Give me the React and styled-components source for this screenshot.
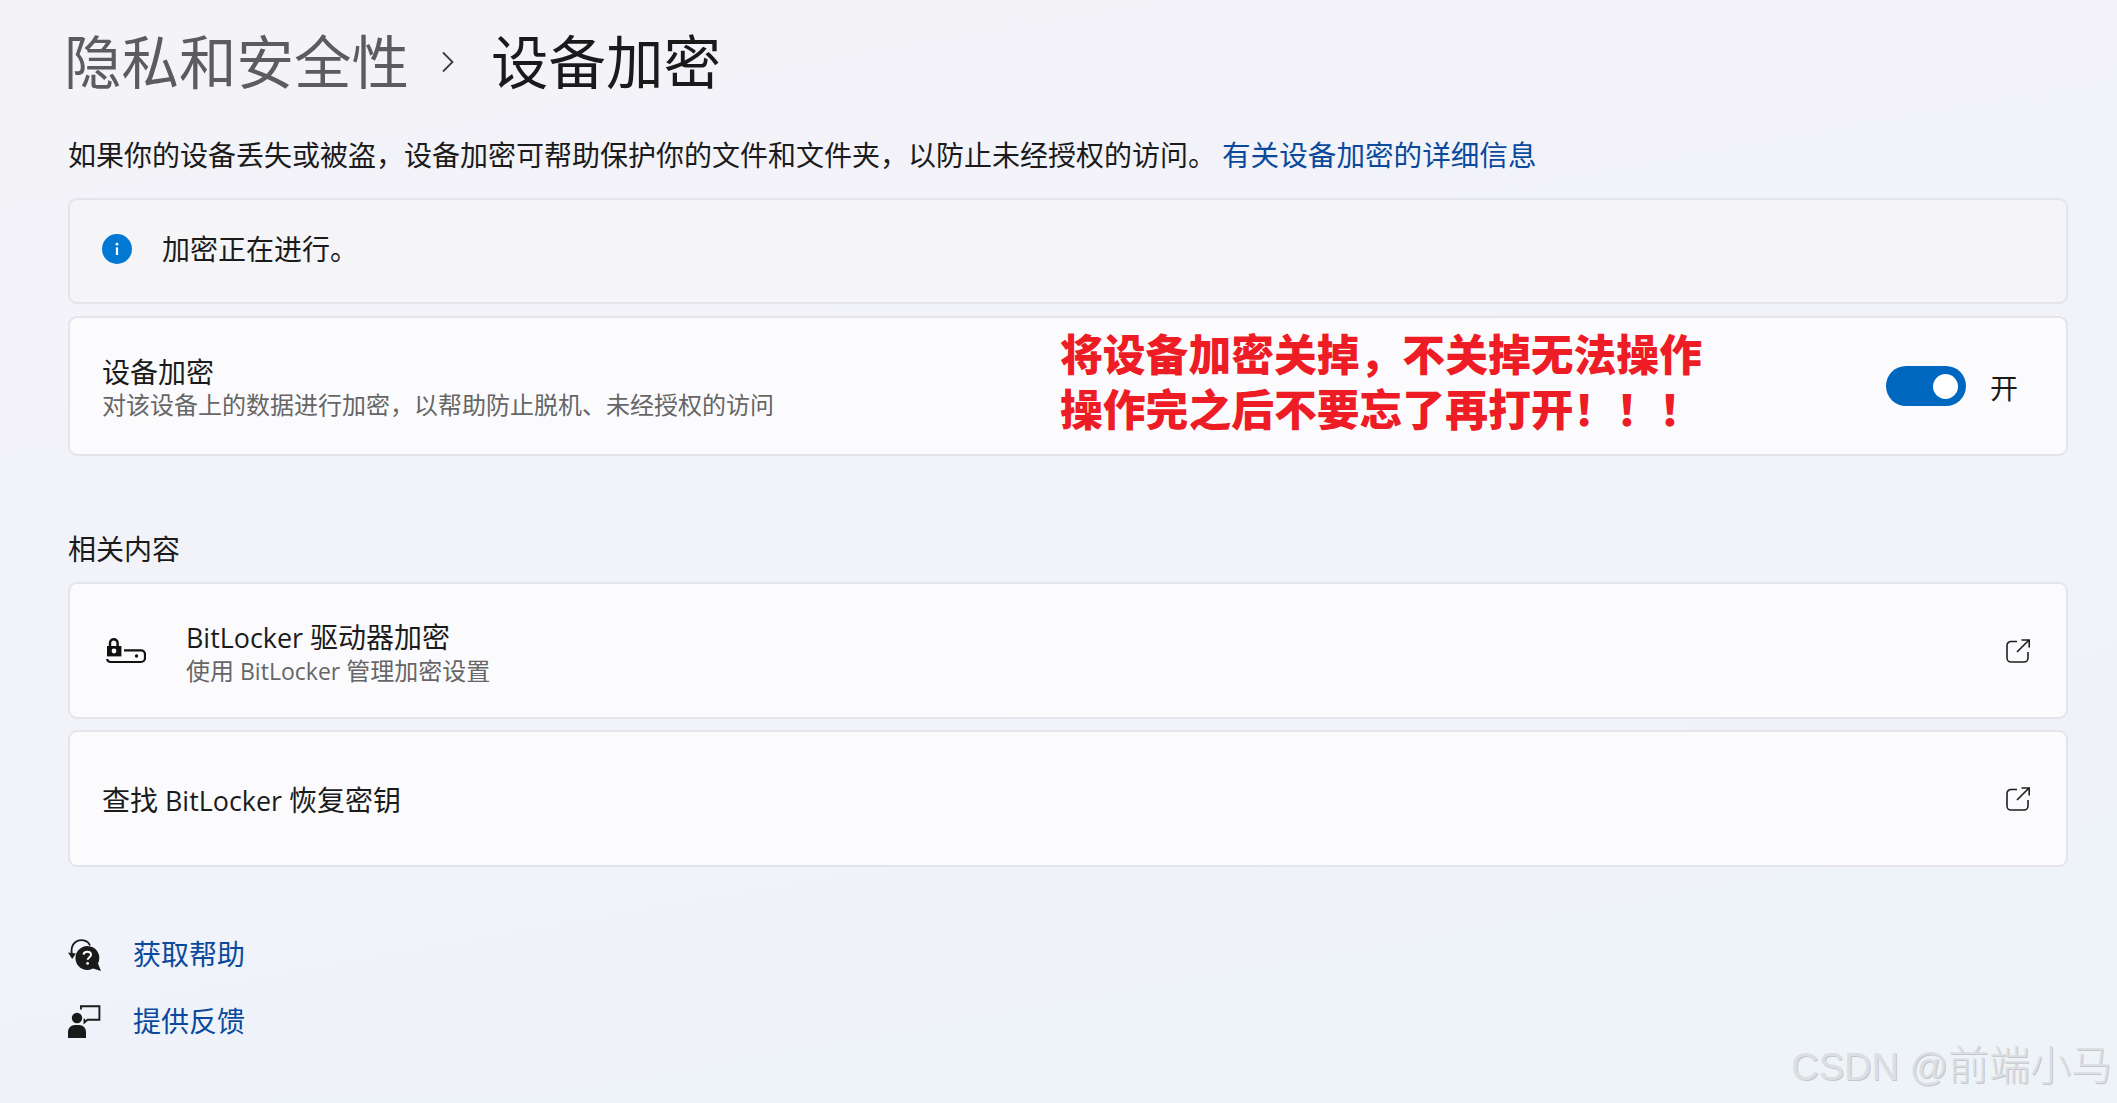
import React from "react";
import styled, { createGlobalStyle } from "styled-components";

const FONT = `"Open Sans", "Noto Sans CJK SC", sans-serif`;

const GlobalStyle = createGlobalStyle`
  html, body {
    margin: 0;
    padding: 0;
    height: 100%;
    overflow: hidden;
  }
  body {
    font-family: ${FONT};
    color: #1b1b1b;
  }
`;

const ExternalIcon = () => (
  <svg width="24" height="24" viewBox="0 0 24 24" fill="none" stroke="#1f1f1f" strokeWidth="1.6">
    <path d="M11 2.5H5a4 4 0 0 0-4 4V19a4 4 0 0 0 4 4h13a4 4 0 0 0 4-4v-6" />
    <path d="M11 13 23 1M15.5 1H23.2V8.5" />
  </svg>
);

const LockDriveIcon = () => (
  <svg width="40" height="27" viewBox="0 0 40 27" fill="none">
    <path d="M4 10V6a3.8 3.8 0 0 1 7.6 0v4" stroke="#111" strokeWidth="2.4" />
    <path d="M1 9h14.4v10.4H1z" fill="#111" />
    <circle cx="8" cy="14" r="2.4" fill="#fff" />
    <path d="M18 13.4h17a4 4 0 0 1 4 4v3.6a4 4 0 0 1-4 4H5a4 4 0 0 1-4-3" stroke="#111" strokeWidth="2.2" />
    <circle cx="30.5" cy="19" r="1.7" fill="#111" />
  </svg>
);

const HelpIcon = () => (
  <svg width="33" height="33" viewBox="0 0 33 33" fill="none">
    <path d="M22 7.5C20 2 12 .5 7.5 4 3.6 7 3 12 4 17" stroke="#1a1a1a" strokeWidth="1.8" />
    <path d="M0 14.5 4.2 21 8 15.5z" fill="#1a1a1a" />
    <path d="M19.5 8a12 12 0 1 0 5.6 22.6L33 33l-3-7.6A12 12 0 0 0 19.5 8z" fill="#1a1a1a" />
    <path d="M15.6 16.6c.3-3.8 7.4-3.8 7.4.2 0 2.8-3.3 2.6-3.3 5" stroke="#fff" strokeWidth="2" />
    <circle cx="19.6" cy="25.4" r="1.4" fill="#fff" />
  </svg>
);

const FeedbackIcon = () => (
  <svg width="33" height="33" viewBox="0 0 33 33" fill="none">
    <circle cx="9" cy="13" r="5.2" fill="#1a1a1a" />
    <path d="M0 33v-6c0-4 3-7 7-7h4c4 0 7 3 7 7v6z" fill="#1a1a1a" />
    <path d="M13 4.5V1.2h18.4v13.6H19.5l-3 2.6v-2.6H17" stroke="#1a1a1a" strokeWidth="1.9" />
  </svg>
);

const App = () => (
  <Page>
    <GlobalStyle />
    <TitleRow>
      <ParentTitle>隐私和安全性</ParentTitle>
      <Chevron width="16" height="24" viewBox="0 0 16 24" fill="none">
        <path d="M3 2.5 12.5 12 3 21.5" stroke="#3c3c3c" strokeWidth="1.8" />
      </Chevron>
      <CurrentTitle>设备加密</CurrentTitle>
    </TitleRow>

    <Description>
      如果你的设备丢失或被盗，设备加密可帮助保护你的文件和文件夹，以防止未经授权的访问。
      <DescLink>有关设备加密的详细信息</DescLink>
    </Description>

    <InfoCard>
      <InfoDot>
        <svg width="30" height="30" viewBox="0 0 30 30">
          <circle cx="15" cy="15" r="15" fill="#0078d4" />
          <circle cx="15" cy="10.2" r="1.4" fill="#fff" />
          <path d="M13.9 13.4h2.2v7.6h-2.2z" fill="#fff" />
        </svg>
      </InfoDot>
      <BodyText>加密正在进行。</BodyText>
    </InfoCard>

    <DeviceCard>
      <TextStack $nudge={2}>
        <BodyText>设备加密</BodyText>
        <SubText>对该设备上的数据进行加密，以帮助防止脱机、未经授权的访问</SubText>
      </TextStack>
      <Annotation>
        将设备加密关掉，不关掉无法操作
        <br />
        操作完之后不要忘了再打开！！！
      </Annotation>
      <ToggleWrap>
        <ToggleTrack>
          <ToggleKnob />
        </ToggleTrack>
        <ToggleLabel>开</ToggleLabel>
      </ToggleWrap>
    </DeviceCard>

    <SectionHead>相关内容</SectionHead>

    <LinkCard>
      <LeadIcon>
        <LockDriveIcon />
      </LeadIcon>
      <TextStack $nudge={3}>
        <BodyText>
          <Latin>BitLocker </Latin>驱动器加密
        </BodyText>
        <SubText>
          使用<Latin> BitLocker </Latin>管理加密设置
        </SubText>
      </TextStack>
      <TrailIcon>
        <ExternalIcon />
      </TrailIcon>
    </LinkCard>

    <LinkCard $second>
      <TextStack $nudge={3}>
        <BodyText>
          查找<Latin> BitLocker </Latin>恢复密钥
        </BodyText>
      </TextStack>
      <TrailIcon>
        <ExternalIcon />
      </TrailIcon>
    </LinkCard>

    <HelpList>
      <HelpRow>
        <HelpIcon />
        <HelpLink>获取帮助</HelpLink>
      </HelpRow>
      <HelpRow>
        <FeedbackIcon />
        <HelpLink>提供反馈</HelpLink>
      </HelpRow>
    </HelpList>

    <Watermark>
      CSDN @<WatermarkCjk>前端小马</WatermarkCjk>
    </Watermark>
  </Page>
);

export default App;

const Page = styled.div`
  position: relative;
  box-sizing: border-box;
  width: 2117px;
  height: 1103px;
  padding: 22px 49px 0 68px;
  overflow: hidden;
  background: linear-gradient(170deg, #f3f3f8 0%, #f2f3f9 45%, #eef3f9 85%, #eef3f8 100%);
`;

const TitleRow = styled.div`
  display: flex;
  align-items: center;
  height: 80px;
`;

const ParentTitle = styled.span`
  margin-left: -4px;
  font-size: 57.5px;
  line-height: 80px;
  font-weight: 400;
  color: #5c5c5f;
`;

const Chevron = styled.svg`
  margin: 0 35px 0 31px;
`;

const CurrentTitle = styled.span`
  font-size: 57.5px;
  line-height: 80px;
  font-weight: 400;
  color: #1a1a1a;
`;

const Description = styled.div`
  margin-top: 33px;
  font-size: 28px;
  line-height: 40px;
  color: #1b1b1b;
  white-space: nowrap;
`;

const DescLink = styled.span`
  margin-left: 6px;
  font-size: 28.6px;
  color: #0a4a9c;
`;

const Card = styled.div`
  position: relative;
  box-sizing: border-box;
  display: flex;
  align-items: center;
  padding: 0 48px 0 32px;
  border: 2px solid #e4e5eb;
  border-radius: 9px;
  background: #fbfbfe;
`;

const InfoCard = styled(Card)`
  margin-top: 23px;
  height: 106px;
  padding-bottom: 4px;
  background: #f5f5f8;
  gap: 30px;
`;

const DeviceCard = styled(Card)`
  margin-top: 12px;
  height: 140px;
  justify-content: space-between;
`;

const LinkCard = styled(Card)`
  margin-top: ${props => (props.$second ? "11px" : "13px")};
  height: 137px;
  padding-right: 36px;
`;

const InfoDot = styled.span`
  display: flex;
  width: 30px;
  height: 30px;
`;

const TextStack = styled.div`
  display: flex;
  flex-direction: column;
  padding-top: ${props => props.$nudge || 0}px;
`;

const BodyText = styled.span`
  font-size: 28px;
  line-height: 36px;
  color: #1b1b1b;
  white-space: pre;
`;

const SubText = styled.span`
  font-size: 24px;
  line-height: 30px;
  color: #666;
  white-space: pre;
`;

const Latin = styled.span`
  font-size: 0.96em;
`;

const Annotation = styled.div`
  position: absolute;
  left: 990px;
  top: 9px;
  font-size: 42.8px;
  line-height: 55px;
  font-weight: 900;
  color: #ee1c25;
  white-space: nowrap;
`;

const ToggleWrap = styled.div`
  display: flex;
  align-items: center;
  gap: 24px;
`;

const ToggleLabel = styled(BodyText)`
  position: relative;
  top: 2px;
`;

const ToggleTrack = styled.div`
  display: flex;
  align-items: center;
  justify-content: flex-end;
  box-sizing: border-box;
  width: 80px;
  height: 40px;
  padding-right: 8px;
  border-radius: 20px;
  background: #0067c0;
`;

const ToggleKnob = styled.div`
  width: 25px;
  height: 25px;
  border-radius: 50%;
  background: #fff;
`;

const SectionHead = styled.div`
  margin-top: 73px;
  font-size: 28px;
  line-height: 40px;
  color: #1b1b1b;
`;

const LeadIcon = styled.span`
  display: flex;
  width: 40px;
  margin: 0 40px 0 4px;
`;

const TrailIcon = styled.span`
  display: flex;
  margin-left: auto;
`;

const HelpList = styled.div`
  display: flex;
  flex-direction: column;
  gap: 34px;
  margin-top: 71px;
`;

const HelpRow = styled.div`
  display: flex;
  align-items: center;
  gap: 32px;
  height: 33px;
`;

const HelpLink = styled.span`
  font-size: 28px;
  line-height: 33px;
  color: #0a4a9c;
`;

const Watermark = styled.div`
  position: absolute;
  right: 5px;
  bottom: 12px;
  display: flex;
  align-items: baseline;
  font-family: "Liberation Sans", "Noto Sans CJK SC", sans-serif;
  font-size: 38px;
  line-height: 48px;
  white-space: pre;
  color: #dcdee2;
  text-shadow: 1px 1px 0 #c4c6ca;
`;

const WatermarkCjk = styled.span`
  font-size: 41px;
  font-weight: 300;
`;
